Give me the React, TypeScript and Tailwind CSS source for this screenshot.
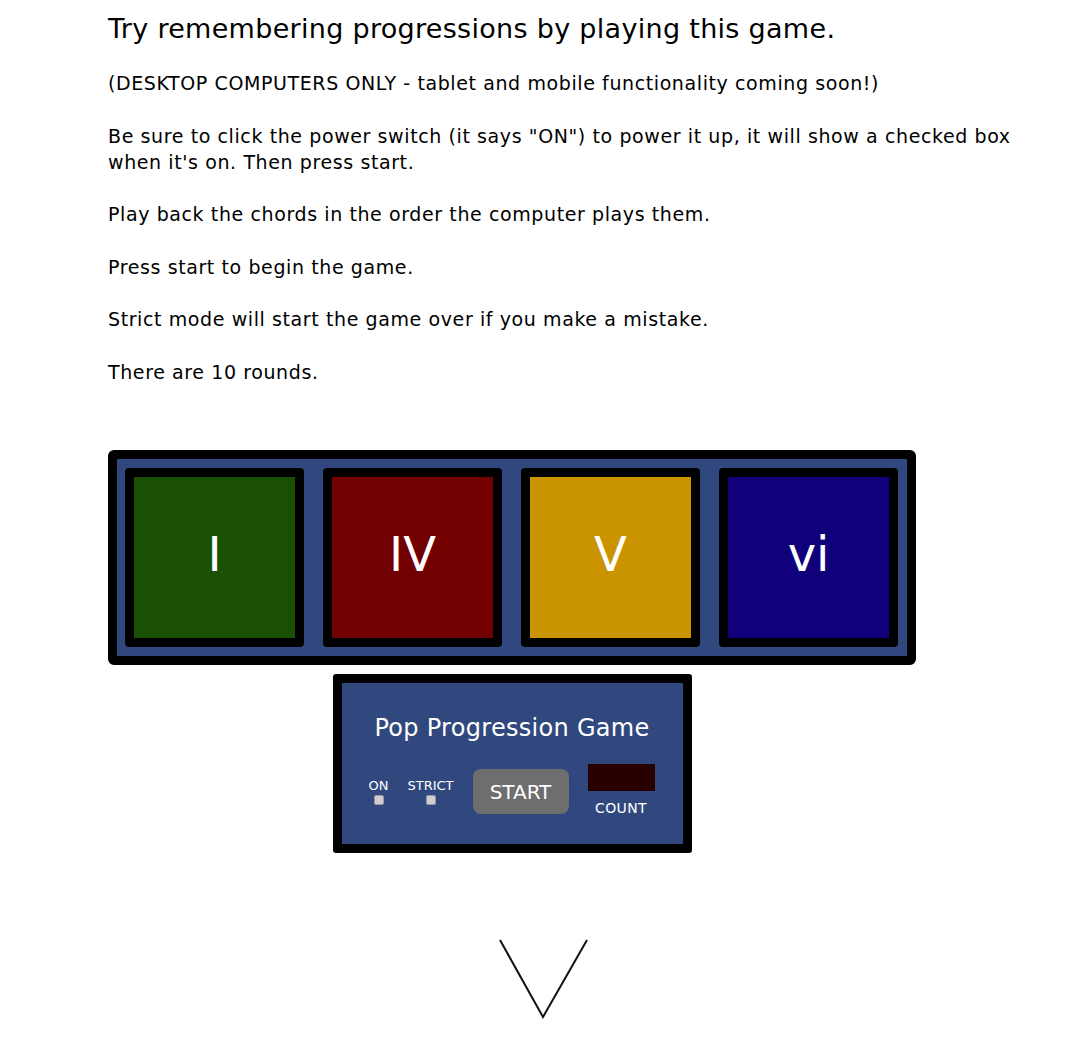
const pads = [
  { label: "I", color: "bg-[#1a5003]" },
  { label: "IV", color: "bg-[#720000]" },
  { label: "V", color: "bg-[#c99400]" },
  { label: "vi", color: "bg-[#10007b]" },
];

function Pad({ label, color }: { label: string; color: string }) {
  return (
    <div className="w-[179px] h-[179px] border-[9px] border-black rounded-[4px] bg-black">
      <div className={`w-full h-full flex items-center justify-center pb-[6px] text-white text-[48px] ${color}`}>
        {label}
      </div>
    </div>
  );
}

function Toggle({ label, width }: { label: string; width: string }) {
  return (
    <div className={`flex flex-col items-center gap-[2px] text-white text-[13px] leading-[14px] ${width}`}>
      <span>{label}</span>
      <span className="w-[10px] h-[10px] rounded-[2px] bg-[#cfcfcf] border border-[#9a9a9a]" />
    </div>
  );
}

export default function App() {
  return (
    <div
      className="min-h-screen bg-white text-black"
      style={{ fontFamily: '"DejaVu Sans", sans-serif' }}
    >
      <div className="w-[912px] ml-[108px] pt-[9px]">
        <h1 className="text-[27px] tracking-[0.3px] leading-[40px] mb-[21px]">
          Try remembering progressions by playing this game.
        </h1>
        <div className="text-[19px] tracking-[0.6px] leading-[26px] space-y-[26.5px]">
          <p>(DESKTOP COMPUTERS ONLY - tablet and mobile functionality coming soon!)</p>
          <p>
            Be sure to click the power switch (it says "ON") to power it up, it will show a checked box
            when it's on. Then press start.
          </p>
          <p>Play back the chords in the order the computer plays them.</p>
          <p>Press start to begin the game.</p>
          <p>Strict mode will start the game over if you make a mistake.</p>
          <p>There are 10 rounds.</p>
        </div>

        <div className="mt-[65px] w-[808px] flex flex-col items-center">
          <div className="w-[808px] border-[9px] border-black rounded-[6px] bg-[#31487f] pl-[8px] pr-[9px] py-[9px] flex justify-between">
            {pads.map((p) => (
              <Pad key={p.label} {...p} />
            ))}
          </div>

          <div className="mt-[9px] w-[359px] h-[179px] border-[9px] border-black rounded-[3px] bg-[#31487f] flex flex-col items-center">
            <div className="mt-[30px] text-white text-[24px] tracking-[0.3px] leading-[30px]">Pop Progression Game</div>
            <div className="mt-[25px] flex items-center w-full pl-[22px]">
              <Toggle label="ON" width="w-[30px]" />
              <div className="w-[11px]" />
              <Toggle label="STRICT" width="w-[52px]" />
              <button className="ml-[16px] w-[96px] h-[45px] rounded-[8px] bg-[#6e6e6e] text-white text-[20px]">
                START
              </button>
              <div className="ml-[19px] flex flex-col items-center mt-[-4px]">
                <div className="w-[67px] h-[27px] bg-[#280000]" />
                <span className="mt-[9px] text-white text-[14px] tracking-[0.4px] leading-[16px]">COUNT</span>
              </div>
            </div>
          </div>
        </div>
      </div>

      <div className="mt-[86px] flex justify-center">
        <svg width="90" height="80" viewBox="0 0 90 80" className="ml-[-3px]">
          <polyline points="1,1 44,78 88,1" fill="none" stroke="#111" strokeWidth="2" />
        </svg>
      </div>
    </div>
  );
}
